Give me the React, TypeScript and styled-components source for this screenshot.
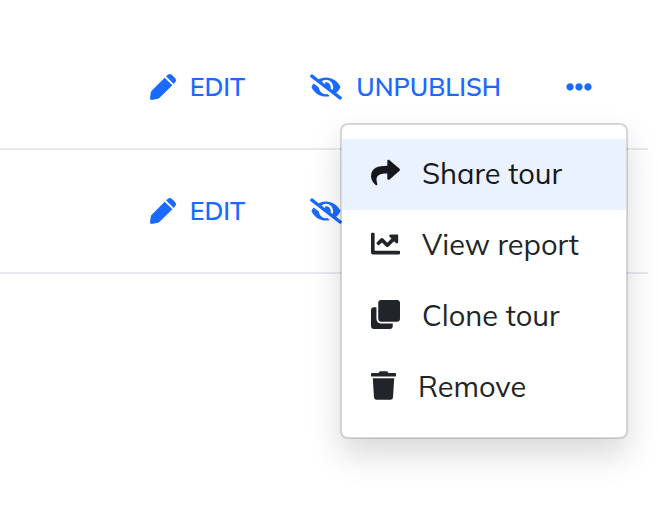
import React from "react";
import styled, { createGlobalStyle } from "styled-components";
import { FaEyeSlash, FaEllipsisH, FaShare, FaChartLine, FaClone, FaTrash } from "react-icons/fa";

const GlobalStyle = createGlobalStyle`
  * { box-sizing: border-box; }
  body {
    margin: 0;
    background: #fff;
    color: #212529;
    font-family: Mulish, "Noto Sans", sans-serif;
  }
`;

const TourList = styled.main`
  min-height: 100vh;
  padding: 26px 10px 0 0;
`;

const TourRow = styled.div`
  position: relative;
  display: flex;
  align-items: center;
  justify-content: flex-end;
  height: 124px;
  padding-right: 56px;
  border-bottom: 2px solid #e9e9f0;
`;

const Action = styled.button<{ $space?: number; $iconWidth?: number }>`
  display: flex;
  align-items: center;
  gap: 14px;
  margin: 0 ${(p) => p.$space ?? 0}px 0 0;
  padding: 0;
  border: 0;
  background: none;
  color: #1a6aff;
  font: 600 25px/32px Mulish, "Noto Sans", sans-serif;
  cursor: pointer;
  svg {
    flex: none;
    width: ${(p) => p.$iconWidth ?? 26}px;
    height: 26px;
  }
`;

const Menu = styled.div`
  position: absolute;
  z-index: 1;
  top: 97px;
  right: 20px;
  width: 288px;
  padding: 14px 0;
  border: 2px solid rgba(0, 0, 0, 0.15);
  border-radius: 8px;
  background: #fff;
  background-clip: padding-box;
  box-shadow: 0 16px 32px rgba(0, 0, 0, 0.15);
`;

const MenuItem = styled.button<{ $active?: boolean; $iconWidth?: number }>`
  display: flex;
  align-items: center;
  gap: 22px;
  width: 100%;
  height: 71px;
  padding: 0 29px 4px;
  border: 0;
  background: ${(p) => (p.$active ? "#ebf2ff" : "transparent")};
  color: ${(p) => (p.$active ? "#16181b" : "#212529")};
  font: 400 29px/36px Mulish, "Noto Sans", sans-serif;
  text-align: left;
  cursor: pointer;
  svg {
    flex: none;
    width: ${(p) => p.$iconWidth ?? 29}px;
    height: 29px;
  }
`;

function PencilIcon() {
  return (
    <svg viewBox="0 0 78 78" fill="currentColor" aria-hidden="true">
      <path d="M44 11 67 34 28 72Q25 75 20 75L5 78Q0 78 0 73L2 58Q2 53 5 50Z" />
      <path d="M48 7 54 2Q60-2 66 3L75 12Q80 18 76 24L71 30Z" />
    </svg>
  );
}

function RowActions() {
  return (
    <>
      <Action $space={65}><PencilIcon />EDIT</Action>
      <Action $space={65} $iconWidth={32}><FaEyeSlash />UNPUBLISH</Action>
      <Action aria-label="More actions"><FaEllipsisH /></Action>
    </>
  );
}

export default function App() {
  return (
    <>
      <GlobalStyle />
      <TourList>
        <TourRow>
          <RowActions />
          <Menu role="menu">
            <MenuItem role="menuitem" $active><FaShare />Share tour</MenuItem>
            <MenuItem role="menuitem"><FaChartLine />View report</MenuItem>
            <MenuItem role="menuitem"><FaClone />Clone tour</MenuItem>
            <MenuItem role="menuitem" $iconWidth={25}><FaTrash />Remove</MenuItem>
          </Menu>
        </TourRow>
        <TourRow>
          <RowActions />
        </TourRow>
      </TourList>
    </>
  );
}
